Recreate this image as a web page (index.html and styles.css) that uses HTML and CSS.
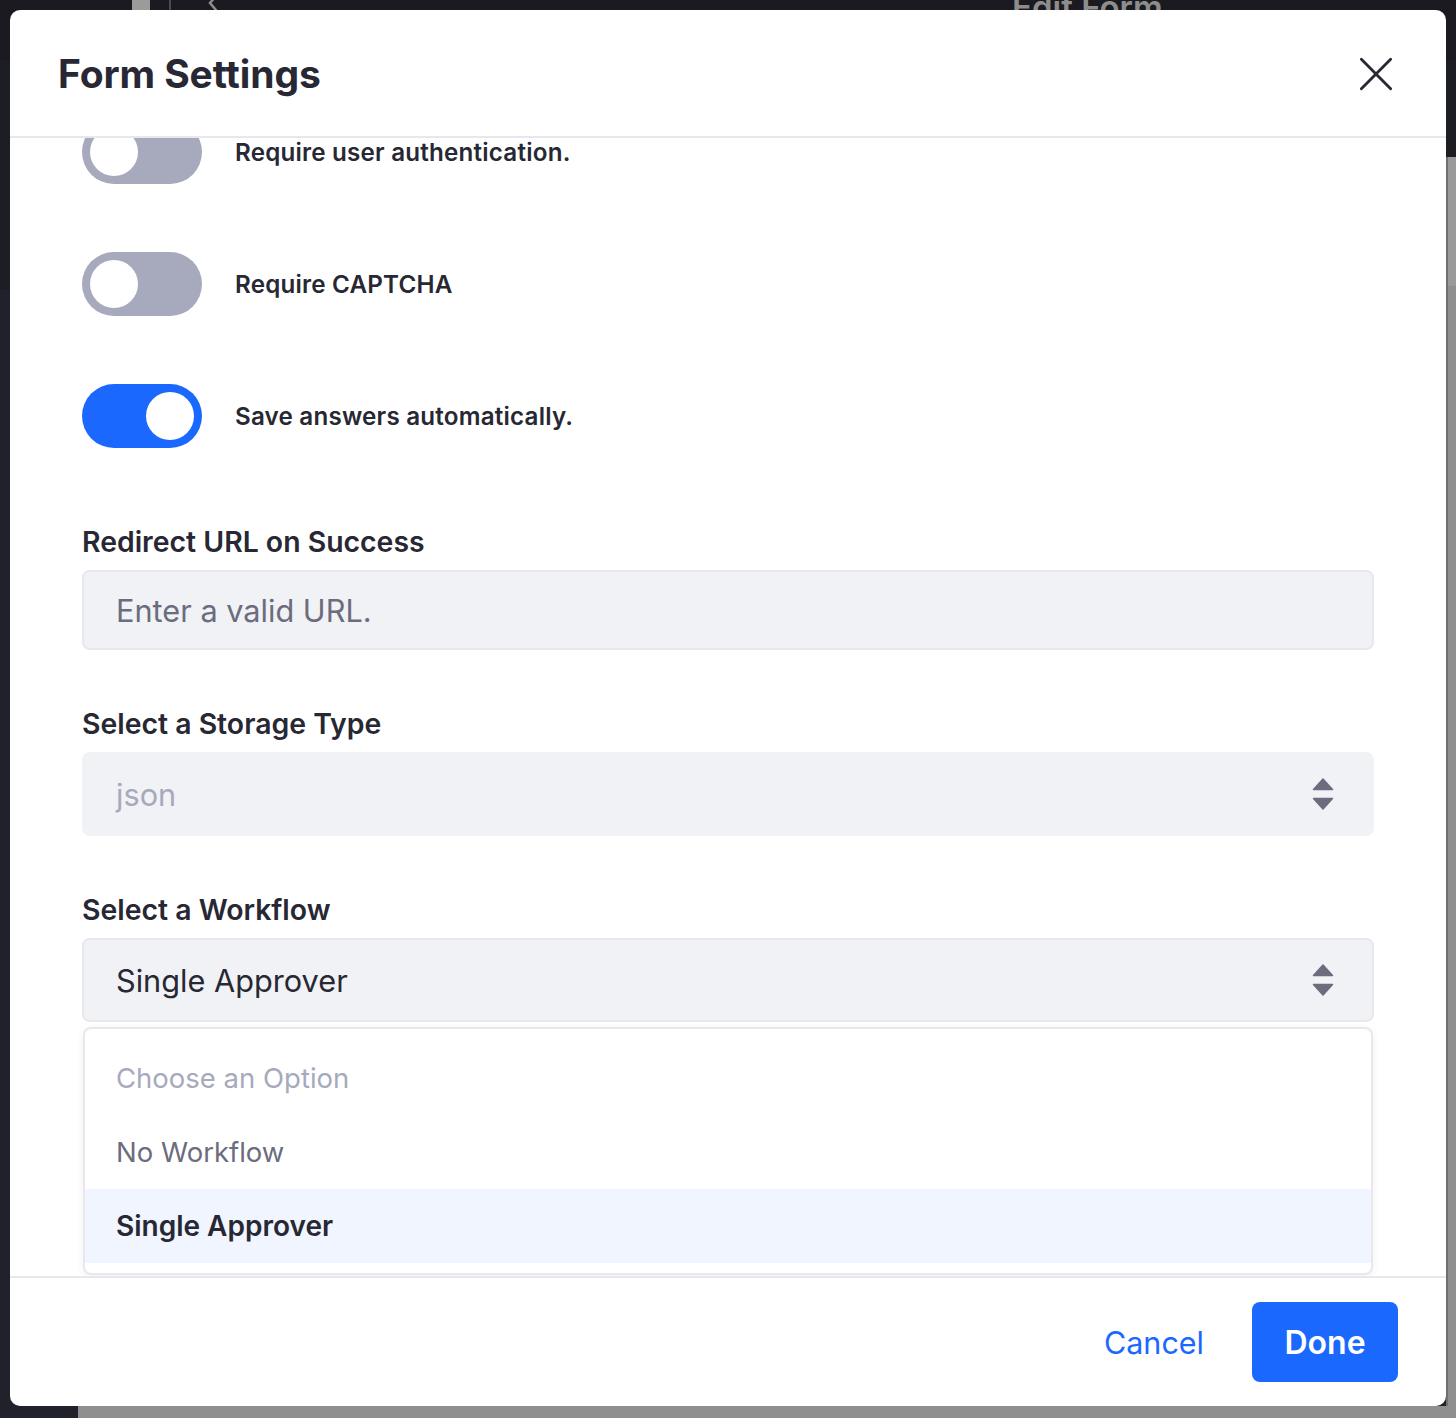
FILE: index.html
```html
<!DOCTYPE html>
<html lang="en">
<head>
<meta charset="utf-8">
<title>Form Settings</title>
<link rel="stylesheet" href="styles.css">
</head>
<body>
<div class="backdrop">
  <div class="bg-block"></div>
  <div class="bg-divider"></div>
  <svg class="bg-chevron" width="14" height="12" viewBox="0 0 14 12"><path d="M10 -4 L4 3 L10 10" fill="none" stroke="#8d8d8d" stroke-width="2.5" stroke-linecap="round"/></svg>
  <div class="bg-title">Edit Form</div>
  <div class="bg-content-right"></div>
  <div class="bg-content-bottom"></div>
</div>

<div class="modal" role="dialog" aria-label="Form Settings">
  <header class="modal-header">
    <h1 class="modal-title">Form Settings</h1>
    <button class="close" aria-label="Close">
      <svg width="36" height="36" viewBox="0 0 36 36"><path d="M2.5 2.5 L33.5 33.5 M33.5 2.5 L2.5 33.5" stroke="#272833" stroke-width="3" stroke-linecap="round"/></svg>
    </button>
  </header>

  <div class="modal-body">
    <div class="form">
      <div class="toggle-row first">
        <span class="toggle"><span class="knob"></span></span>
        <span class="toggle-label">Require user authentication.</span>
      </div>
      <div class="toggle-row">
        <span class="toggle"><span class="knob"></span></span>
        <span class="toggle-label">Require CAPTCHA</span>
      </div>
      <div class="toggle-row">
        <span class="toggle on"><span class="knob"></span></span>
        <span class="toggle-label">Save answers automatically.</span>
      </div>

      <div class="form-group url-group">
        <label class="field-label">Redirect URL on Success</label>
        <div class="input placeholder">Enter a valid URL.</div>
      </div>

      <div class="form-group">
        <label class="field-label">Select a Storage Type</label>
        <div class="select disabled">
          <span>json</span>
          <svg class="caret" width="22" height="34" viewBox="0 0 22 34"><path d="M11 2 L20.5 12.5 L1.5 12.5 Z M11 32 L20.5 21.5 L1.5 21.5 Z" fill="#6b6c7e" stroke="#6b6c7e" stroke-width="1.5" stroke-linejoin="round"/></svg>
        </div>
      </div>

      <div class="form-group">
        <label class="field-label">Select a Workflow</label>
        <div class="select bordered">
          <span>Single Approver</span>
          <svg class="caret" width="22" height="34" viewBox="0 0 22 34"><path d="M11 2 L20.5 12.5 L1.5 12.5 Z M11 32 L20.5 21.5 L1.5 21.5 Z" fill="#6b6c7e" stroke="#6b6c7e" stroke-width="1.5" stroke-linejoin="round"/></svg>
        </div>
        <ul class="dropdown">
          <li class="opt muted">Choose an Option</li>
          <li class="opt">No Workflow</li>
          <li class="opt active">Single Approver</li>
        </ul>
      </div>
    </div>
  </div>

  <footer class="modal-footer">
    <button class="btn btn-link">Cancel</button>
    <button class="btn btn-primary">Done</button>
  </footer>
</div>
</body>
</html>
```

FILE: styles.css
```css
* { box-sizing: border-box; }

html, body {
  margin: 0;
  padding: 0;
  width: 1456px;
  height: 1418px;
  overflow: hidden;
}

body {
  background: #1e1f27;
  font-family: Inter, "Noto Sans", "Liberation Sans", sans-serif;
  color: #272833;
  position: relative;
}

/* ---------- backdrop page (dimmed) ---------- */
.backdrop {
  position: absolute;
  inset: 0;
  background: linear-gradient(#1a1a20 0, #1a1a20 60px, #1d1d24 60px, #1d1d24 290px, #20212a 290px);
}
.bg-block {
  position: absolute;
  left: 132px;
  top: 0;
  width: 18px;
  height: 12px;
  background: #9b9b9b;
}
.bg-divider {
  position: absolute;
  left: 169px;
  top: 0;
  width: 2px;
  height: 12px;
  background: #4b4c54;
}
.bg-chevron {
  position: absolute;
  left: 206px;
  top: 0;
}
.bg-title {
  position: absolute;
  left: 1012px;
  top: -13px;
  font-size: 33px;
  line-height: 40px;
  font-weight: 600;
  color: #8d8d8d;
  white-space: nowrap;
}
.bg-content-right {
  position: absolute;
  left: 1446px;
  top: 157px;
  width: 10px;
  bottom: 0;
  background: linear-gradient(#9a9a9a 0, #9a9a9a 129px, #8f8f8f 129px);
  border-left: 2px solid #707070;
}
.bg-content-bottom {
  position: absolute;
  left: 78px;
  right: 0;
  top: 1406px;
  bottom: 0;
  background: #8f8f8f;
}

/* ---------- modal ---------- */
.modal {
  position: absolute;
  left: 10px;
  top: 10px;
  width: 1436px;
  height: 1396px;
  background: #fff;
  border-radius: 10px;
  overflow: hidden;
  display: flex;
  flex-direction: column;
}

.modal-header {
  height: 128px;
  flex: none;
  border-bottom: 2px solid #e7e7ed;
  display: flex;
  align-items: center;
  justify-content: space-between;
  padding: 0 52px 0 48px;
}
.modal-title {
  margin: 0;
  margin-top: 0;
  font-size: 39px;
  font-weight: 700;
  letter-spacing: -0.1px;
  color: #272833;
}
.close {
  border: 0;
  background: none;
  padding: 0;
  width: 36px;
  height: 36px;
  display: flex;
  margin-top: 2px;
}
.close svg { width: 34px; height: 34px; margin: 1px; }

.modal-body {
  flex: 1;
  overflow: hidden;
  padding: 0 72px;
}

.form {
  display: flex;
  flex-direction: column;
}

.toggle-row {
  display: flex;
  align-items: center;
  height: 64px;
  margin-bottom: 68px;
  gap: 33px;
}
.toggle-row.first { margin-top: -18px; }

.toggle {
  position: relative;
  width: 120px;
  height: 64px;
  border-radius: 32px;
  background: #a7a9bc;
  flex: none;
}
.toggle .knob {
  position: absolute;
  top: 8px;
  left: 8px;
  width: 48px;
  height: 48px;
  border-radius: 50%;
  background: #fff;
}
.toggle.on { background: #1b68ff; }
.toggle.on .knob { left: 64px; }

.toggle-label {
  font-size: 24.2px;
  font-weight: 600;
  color: #272833;
  letter-spacing: 0.2px;
}

.form-group {
  display: flex;
  flex-direction: column;
  margin-bottom: 56px;
}
.url-group { margin-top: 8px; }

.field-label {
  font-size: 28.4px;
  font-weight: 600;
  line-height: 36px;
  margin-bottom: 10px;
  color: #272833;
}

.input,
.select {
  background: #f1f2f5;
  border-radius: 8px;
  font-size: 30.7px;
  display: flex;
  align-items: center;
  padding: 0 32px;
}
.input {
  height: 80px;
  border: 2px solid #e7e7ed;
}
.placeholder { color: #6b6c7e; }

.select {
  height: 84px;
  justify-content: space-between;
  padding-right: 38px;
  border: 2px solid #f1f2f5;
  color: #272833;
}
.select.disabled { color: #a7a9bc; }
.select.bordered { border-color: #e7e7ed; }
.caret { flex: none; margin-right: 0; }

.dropdown {
  list-style: none;
  margin: 5px 1px 0;
  padding: 12px 0 10px;
  border: 2px solid #e7e7ed;
  border-radius: 8px;
  background: #fff;
  box-shadow: 0 2px 8px rgba(39, 40, 51, 0.06);
}
.opt {
  height: 74px;
  display: flex;
  align-items: center;
  padding: 0 31px;
  font-size: 27.5px;
  color: #6b6c7e;
}
.opt.muted { color: #a7a9bc; }
.opt.active {
  background: #f0f5ff;
  color: #272833;
  font-weight: 600;
  font-size: 28px;
}

.modal-footer {
  height: 130px;
  flex: none;
  border-top: 2px solid #e7e7ed;
  display: flex;
  align-items: center;
  justify-content: flex-end;
  gap: 14px;
  padding: 0 48px 0 0;
}
.btn {
  font-family: inherit;
  font-size: 32px;
  height: 80px;
  border-radius: 8px;
  border: 0;
  padding: 0 34px;
  cursor: pointer;
}
.btn-link {
  background: none;
  color: #1b68ff;
  font-weight: 400;
  font-size: 30.5px;
}
.btn-primary {
  background: #1b68ff;
  color: #fff;
  font-weight: 600;
  width: 146px;
  padding: 0;
}
```
